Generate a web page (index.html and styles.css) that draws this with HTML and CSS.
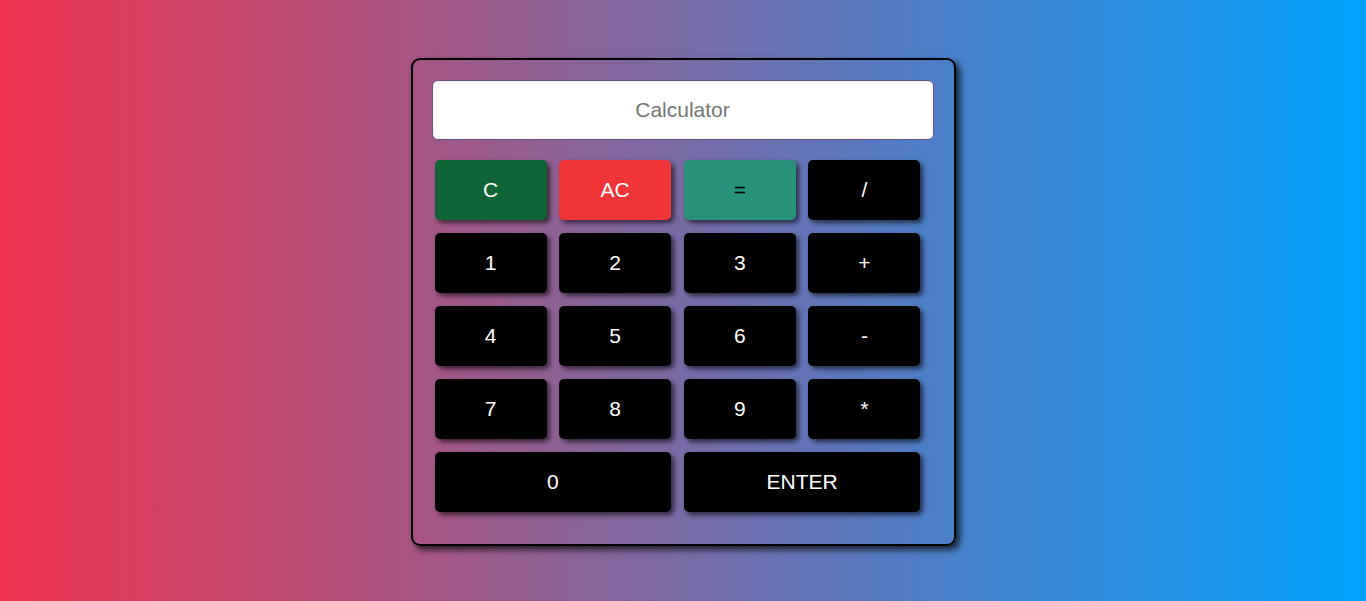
FILE: index.html
```html
<!DOCTYPE html>
<html lang="en">
<head>
<meta charset="utf-8">
<title>Calculator</title>
<link rel="stylesheet" href="styles.css">
</head>
<body>
<main class="page">
  <div class="calc">
    <input class="display" type="text" placeholder="Calculator">
    <div class="keys">
      <button class="key key-c">C</button>
      <button class="key key-ac">AC</button>
      <button class="key key-eq">=</button>
      <button class="key">/</button>
      <button class="key">1</button>
      <button class="key">2</button>
      <button class="key">3</button>
      <button class="key">+</button>
      <button class="key">4</button>
      <button class="key">5</button>
      <button class="key">6</button>
      <button class="key">-</button>
      <button class="key">7</button>
      <button class="key">8</button>
      <button class="key">9</button>
      <button class="key">*</button>
      <button class="key key-wide">0</button>
      <button class="key key-wide">ENTER</button>
    </div>
  </div>
</main>
</body>
</html>
```
FILE: styles.css
```css
html, body {
  margin: 0;
  padding: 0;
  height: 100%;
}
body {
  background: linear-gradient(to right, #f0334d, #00a2ff);
  font-family: "Liberation Sans", Arial, sans-serif;
}
.page {
  display: flex;
  justify-content: center;
  padding-top: 58px;
}
.calc {
  border: 2px solid #000;
  border-radius: 9px;
  box-shadow: 4px 4px 6px rgba(0, 0, 0, 0.7);
  padding: 20px 20px 0 19px;
  box-sizing: border-box;
  width: 545px;
  height: 488px;
  display: flex;
  flex-direction: column;
}
.display {
  width: 502px;
  height: 60px;
  box-sizing: border-box;
  border: 1px solid #6a4f86;
  border-radius: 6px;
  background: #fff;
  text-align: center;
  font-family: "Liberation Sans", Arial, sans-serif;
  font-size: 21px;
  color: #333;
  outline: none;
  margin: 0;
  padding: 0;
}
.display::placeholder {
  color: #757575;
}
.keys {
  display: grid;
  grid-template-columns: repeat(4, 112px);
  column-gap: 12.67px;
  row-gap: 13px;
  grid-auto-rows: 60px;
  margin-top: 20px;
  margin-left: 3px;
}
.key {
  border: none;
  border-radius: 5px;
  background: #000;
  color: #fff;
  font-family: "Liberation Sans", Arial, sans-serif;
  font-size: 21px;
  box-shadow: 3px 3px 5px rgba(0, 0, 0, 0.6);
  padding: 0;
  margin: 0;
  cursor: pointer;
}
.key-c {
  background: #0f6435;
}
.key-ac {
  background: #f03538;
}
.key-eq {
  background: #279179;
  color: #000;
}
.key-wide {
  grid-column: span 2;
}
```
